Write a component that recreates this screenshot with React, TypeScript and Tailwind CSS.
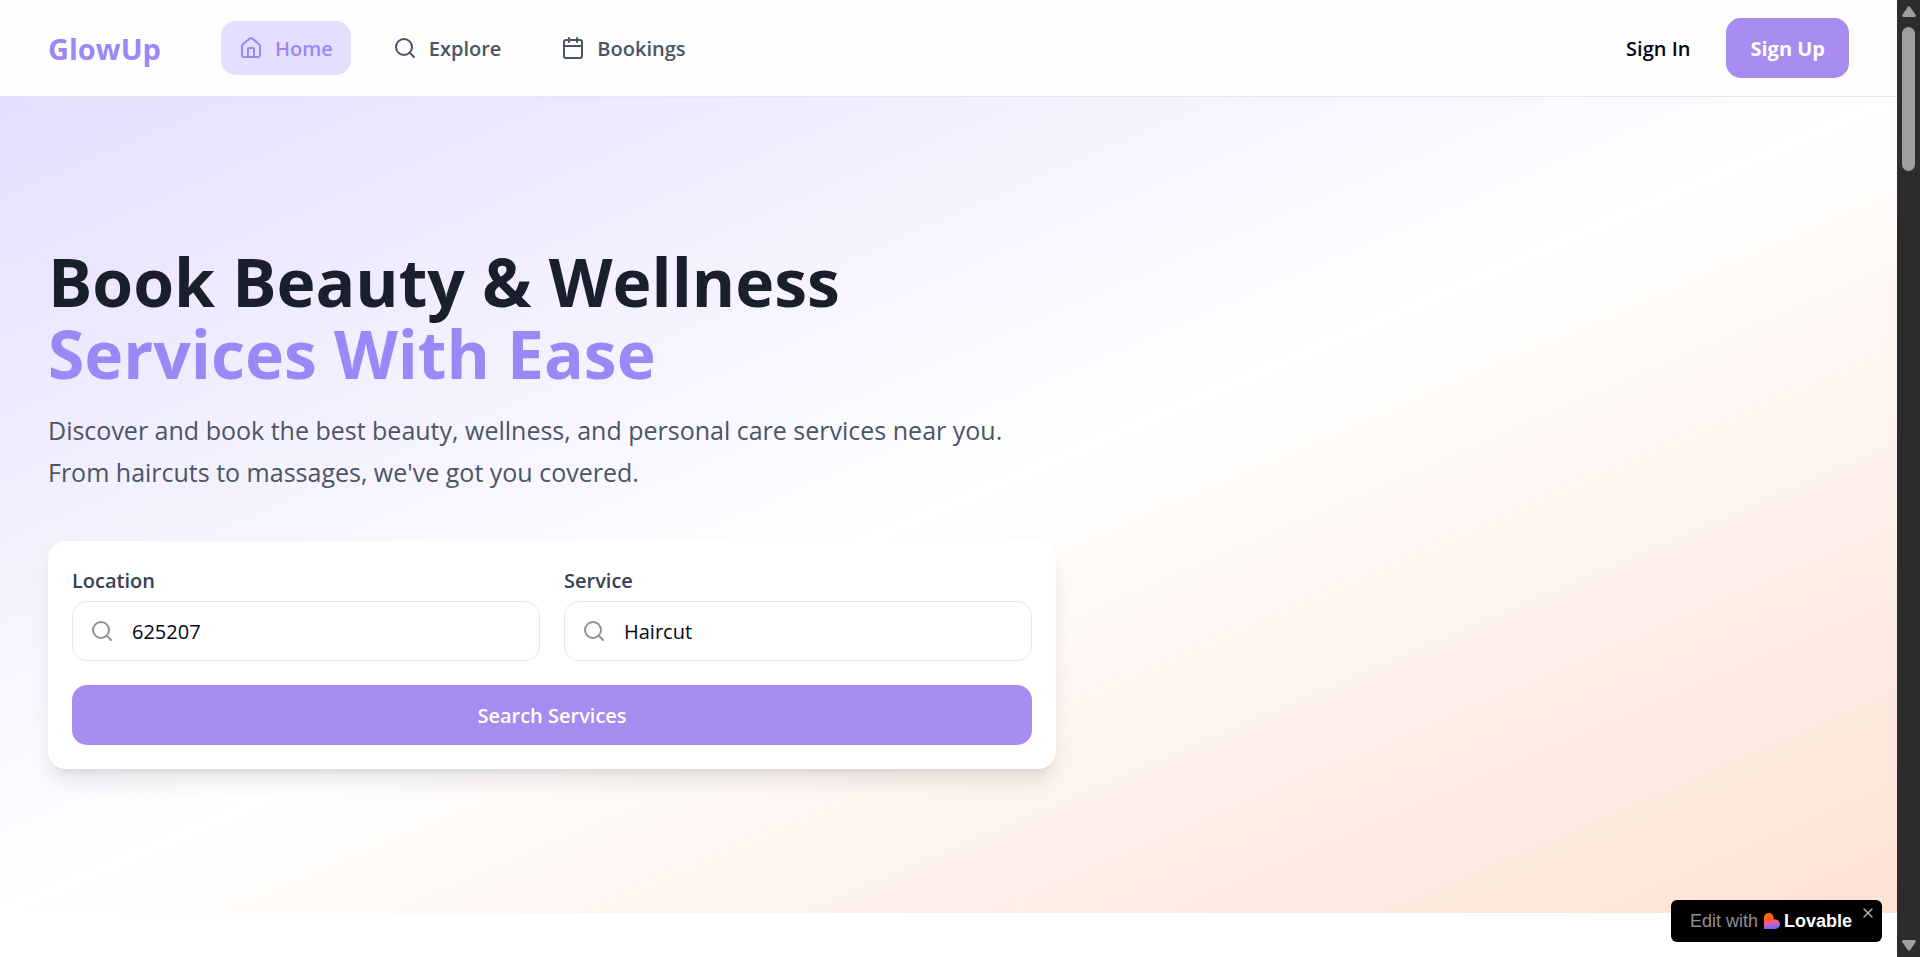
import React from "react";
import { Calendar, House, Search, X } from "lucide-react";

const navItems = [
  { label: "Home", icon: House, active: true },
  { label: "Explore", icon: Search, active: false },
  { label: "Bookings", icon: Calendar, active: false },
];

const fields = [
  { id: "location", label: "Location", value: "625207" },
  { id: "service", label: "Service", value: "Haircut" },
];

const Navbar = () => {
  return (
    <header className="border-b border-slate-200 bg-[#fdfdfd]">
      <div className="flex h-24 items-center justify-between px-12">
        <div className="flex items-center gap-15">
          <a href="#" className="pt-0.5 text-[29px] leading-9 font-bold text-[#9b87f5]">
            GlowUp
          </a>
          <nav className="flex items-center gap-6">
            {navItems.map(({ label, icon: Icon, active }) => (
              <a
                key={label}
                href="#"
                className={`flex h-[54px] items-center gap-3 rounded-[15px] px-[18px] text-xl font-semibold ${
                  active ? "bg-[#e5deff] text-[#9b87f5]" : "text-gray-600"
                }`}
              >
                <Icon className="size-6" />
                <span className="pt-0.5">{label}</span>
              </a>
            ))}
          </nav>
        </div>
        <div className="flex items-center gap-3">
          <button className="h-15 rounded-[15px] px-6 pt-0.5 text-xl font-semibold text-slate-950">
            Sign In
          </button>
          <button className="h-15 rounded-[15px] bg-[#a78bee] px-6 pt-0.5 text-xl font-bold text-white">
            Sign Up
          </button>
        </div>
      </div>
    </header>
  );
};

const SearchCard = () => {
  return (
    <form
      className="mt-12 rounded-[18px] bg-white p-6 shadow-[0_15px_22px_-4px_rgba(0,0,0,0.1),0_6px_9px_-6px_rgba(0,0,0,0.1)]"
      onSubmit={(e) => e.preventDefault()}
    >
      <div className="grid grid-cols-1 gap-6 md:grid-cols-2">
        {fields.map((field) => (
          <div key={field.id}>
            <label
              htmlFor={field.id}
              className="mb-1 block text-xl leading-8 font-semibold text-gray-700"
            >
              {field.label}
            </label>
            <div className="flex h-15 items-center gap-[18px] rounded-[15px] border border-slate-200 px-[17px]">
              <Search className="size-6 shrink-0 text-[#8e9196]" />
              <input
                id={field.id}
                type="text"
                defaultValue={field.value}
                className="w-full min-w-0 bg-transparent pt-0.5 text-xl text-slate-950 outline-none"
              />
            </div>
          </div>
        ))}
      </div>
      <button
        type="submit"
        className="mt-6 h-15 w-full rounded-[15px] bg-[#a78bee] pt-0.5 text-xl font-semibold text-white"
      >
        Search Services
      </button>
    </form>
  );
};

const Hero = () => {
  return (
    <section className="bg-linear-to-br/srgb from-[#e5deff] via-white to-[#fde1d3] px-12 pt-37 pb-36">
      <div className="max-w-[1008px]">
        <h1 className="text-[66px] leading-[72px] font-bold text-[#1a1f2c]">
          Book Beauty &amp; Wellness
          <span className="block text-[#9b87f5]">Services With Ease</span>
        </h1>
        <p className="mt-5 text-[25px] leading-[42px] text-gray-600">
          Discover and book the best beauty, wellness, and personal care
          services near you.
          <br />
          From haircuts to massages, we've got you covered.
        </p>
        <SearchCard />
      </div>
    </section>
  );
};

const LovableBadge = () => {
  return (
    <div className="absolute right-[15px] bottom-[15px] flex h-[42px] items-center rounded-md bg-black pr-1.5 pl-[19px] font-['Liberation_Sans',sans-serif] text-lg">
      <span className="text-[#8f8f98]">Edit with</span>
      <svg viewBox="0 0 16 16" className="mr-1 ml-[6px] size-4">
        <defs>
          <linearGradient id="heart" x1="0.35" y1="0.1" x2="0.5" y2="1">
            <stop offset="0.15" stopColor="#ff6a00" />
            <stop offset="0.4" stopColor="#ff5a4a" />
            <stop offset="0.6" stopColor="#f05aa8" />
            <stop offset="0.95" stopColor="#5b73ff" />
          </linearGradient>
        </defs>
        <path
          d="M0 4.8C0 2.1 2.1 0 4.8 0s4.8 2.1 4.8 4.8v1.8h1.6c2.7 0 4.8 2.1 4.8 4.7S13.9 16 11.2 16H0z"
          fill="url(#heart)"
        />
      </svg>
      <span className="font-bold text-white">Lovable</span>
      <button aria-label="Close" className="mb-4 ml-2">
        <X className="size-4 text-[#b4b4bc]" />
      </button>
    </div>
  );
};

const Scrollbar = () => {
  return (
    <div className="flex w-[23px] shrink-0 flex-col items-center bg-[#2c2c2c] py-[6px]">
      <svg viewBox="0 0 14 11" className="h-[11px] w-[14px] fill-[#9f9f9f]">
        <path d="M6 .8q1-1.200 2 0l5.600 8q.8 2-1 2.200H1.400q-1.800-.2-1-2.200z" />
      </svg>
      <div className="mt-[10px] h-36 w-[13px] rounded-full bg-[#9f9f9f]" />
      <svg viewBox="0 0 14 11" className="mt-auto h-[11px] w-[14px] fill-[#9f9f9f]">
        <path d="M6 10.200q1 1.200 2 0l5.600-8q.8-2-1-2.200H1.400q-1.800.2-1 2.200z" />
      </svg>
    </div>
  );
};

const App = () => {
  return (
    <div className="flex h-screen bg-white font-['Open_Sans','Noto_Sans',sans-serif]">
      <div className="relative min-w-0 flex-1 overflow-hidden">
        <Navbar />
        <Hero />
        <LovableBadge />
      </div>
      <Scrollbar />
    </div>
  );
};

export default App;
